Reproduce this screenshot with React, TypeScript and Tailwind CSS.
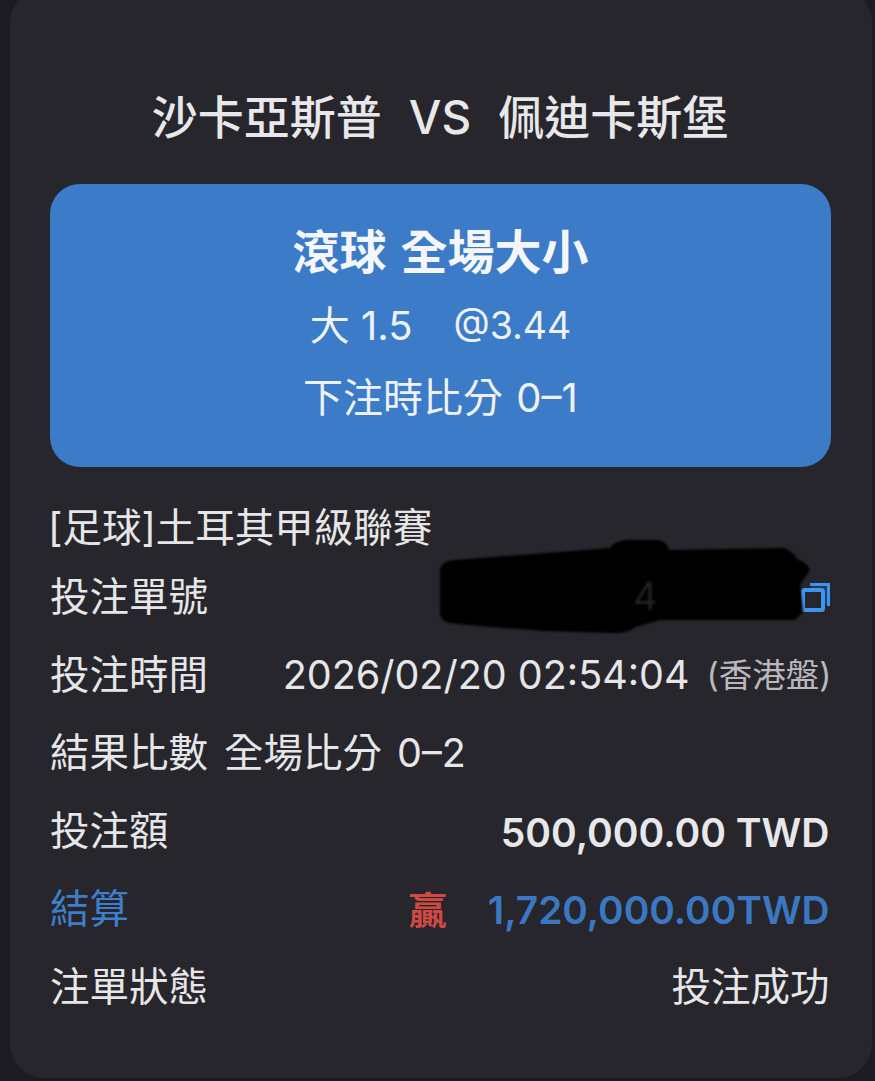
const FONT = "font-['Inter','Noto_Sans_CJK_TC',sans-serif]";

function CopyIcon() {
  return (
    <svg width="30" height="32" viewBox="0 0 30 32" fill="none" className="mr-[-1.5px] block">
      <path d="M9 2.5h18.5V24" stroke="#3f94ec" strokeWidth="3" />
      <path d="M10 5.5h15v17" stroke="#17427c" strokeWidth="2" />
      <rect x="2" y="8" width="20" height="20" rx="1.5" stroke="#3f94ec" strokeWidth="4" />
    </svg>
  );
}

function Row({ label, children, labelClass }: { label: string; children?: React.ReactNode; labelClass?: string }) {
  return (
    <div className="flex h-[78px] items-center justify-between pr-[1.5px]">
      <span className={labelClass ?? "text-[#e6e6e8]"}>{label}</span>
      {children}
    </div>
  );
}

export default function App() {
  return (
    <div className={`${FONT} h-[1081px] w-[875px] overflow-hidden bg-[#1c1b21] text-[39.5px] leading-none`}>
      <div className="relative ml-[10px] mt-[-12px] h-[1090px] w-[862px] rounded-[34px] bg-[#27262c] px-[40px]">
        <h1 className="flex h-[258px] items-center justify-center gap-[27px] pr-[2px] text-[46px] font-medium text-[#e8e8ea]">
          <span>沙卡亞斯普</span>
          <span>VS</span>
          <span>佩迪卡斯堡</span>
        </h1>

        <div className="mt-[-62px] flex h-[283px] w-[781px] flex-col items-center rounded-[30px] bg-[#3b7bc8] pt-[44px] text-[40px] text-white">
          <div className="text-[47px] font-bold text-[#f4f6f9] [word-spacing:3px]">滾球 全場大小</div>
          <div className="mt-[31px] flex h-[40px] items-center text-[#eef2f7]">
            <span>大 1.5</span>
            <span className="ml-[41px] text-[37.5px]">@3.44</span>
          </div>
          <div className="mt-[32px] text-[#eef2f7] [word-spacing:2px]">下注時比分 0–1</div>
        </div>

        <div className="mt-[42px] h-[46px] text-[#e6e6e8]">
          <span className="ml-[-2px]">[足球]土耳其甲級聯賽</span>
        </div>

        <div className="mt-[4px] w-[781px]">
          <Row label="投注單號">
            <CopyIcon />
          </Row>
          <Row label="投注時間">
            <span className="mr-[-2px] flex items-center text-[#e6e6e8]">
              2026/02/20 02:54:04
              <span className="ml-[17px] text-[33.5px] text-[#b9b9bd]">(香港盤)</span>
            </span>
          </Row>
          <div className="flex h-[78px] items-center whitespace-pre text-[#e6e6e8]">
            <span>結果比數</span>
            <span className="ml-[16px]">全場比分</span>
            <span className="ml-[15px]">0–2</span>
          </div>
          <Row label="投注額">
            <span className="text-[39px] font-semibold text-[#e8e8ea]">500,000.00 TWD</span>
          </Row>
          <Row label="結算" labelClass="text-[#3f7ec9]">
            <span className="flex items-center">
              <span className="text-[38px] font-bold text-[#cf4a43]">贏</span>
              <span className="ml-[41px] text-[38.8px] font-semibold text-[#3a78c4]">1,720,000.00TWD</span>
            </span>
          </Row>
          <Row label="注單狀態">
            <span className="text-[#e6e6e8]">投注成功</span>
          </Row>
        </div>

        {/* redaction scribble */}
        <svg width="400" height="110" viewBox="0 0 400 110" className="absolute left-[425px] top-[547px] blur-[1px]">
          <path
            d="M5 35 Q6 26 20 25 L175 13 Q180 5 195 5 L222 5 Q232 6 234 15 L348 13 Q358 16 362 24 Q373 28 375 35 L365 50 L368 77 L360 85 L240 85 Q228 85 225 85 L200 92 Q195 98 178 98 L110 96 Q50 92 15 88 Q5 86 5 78 Z"
            fill="#000000"
          />
          <text x="198" y="75" fontSize="38" fill="#222222">4</text>
        </svg>
      </div>
    </div>
  );
}
